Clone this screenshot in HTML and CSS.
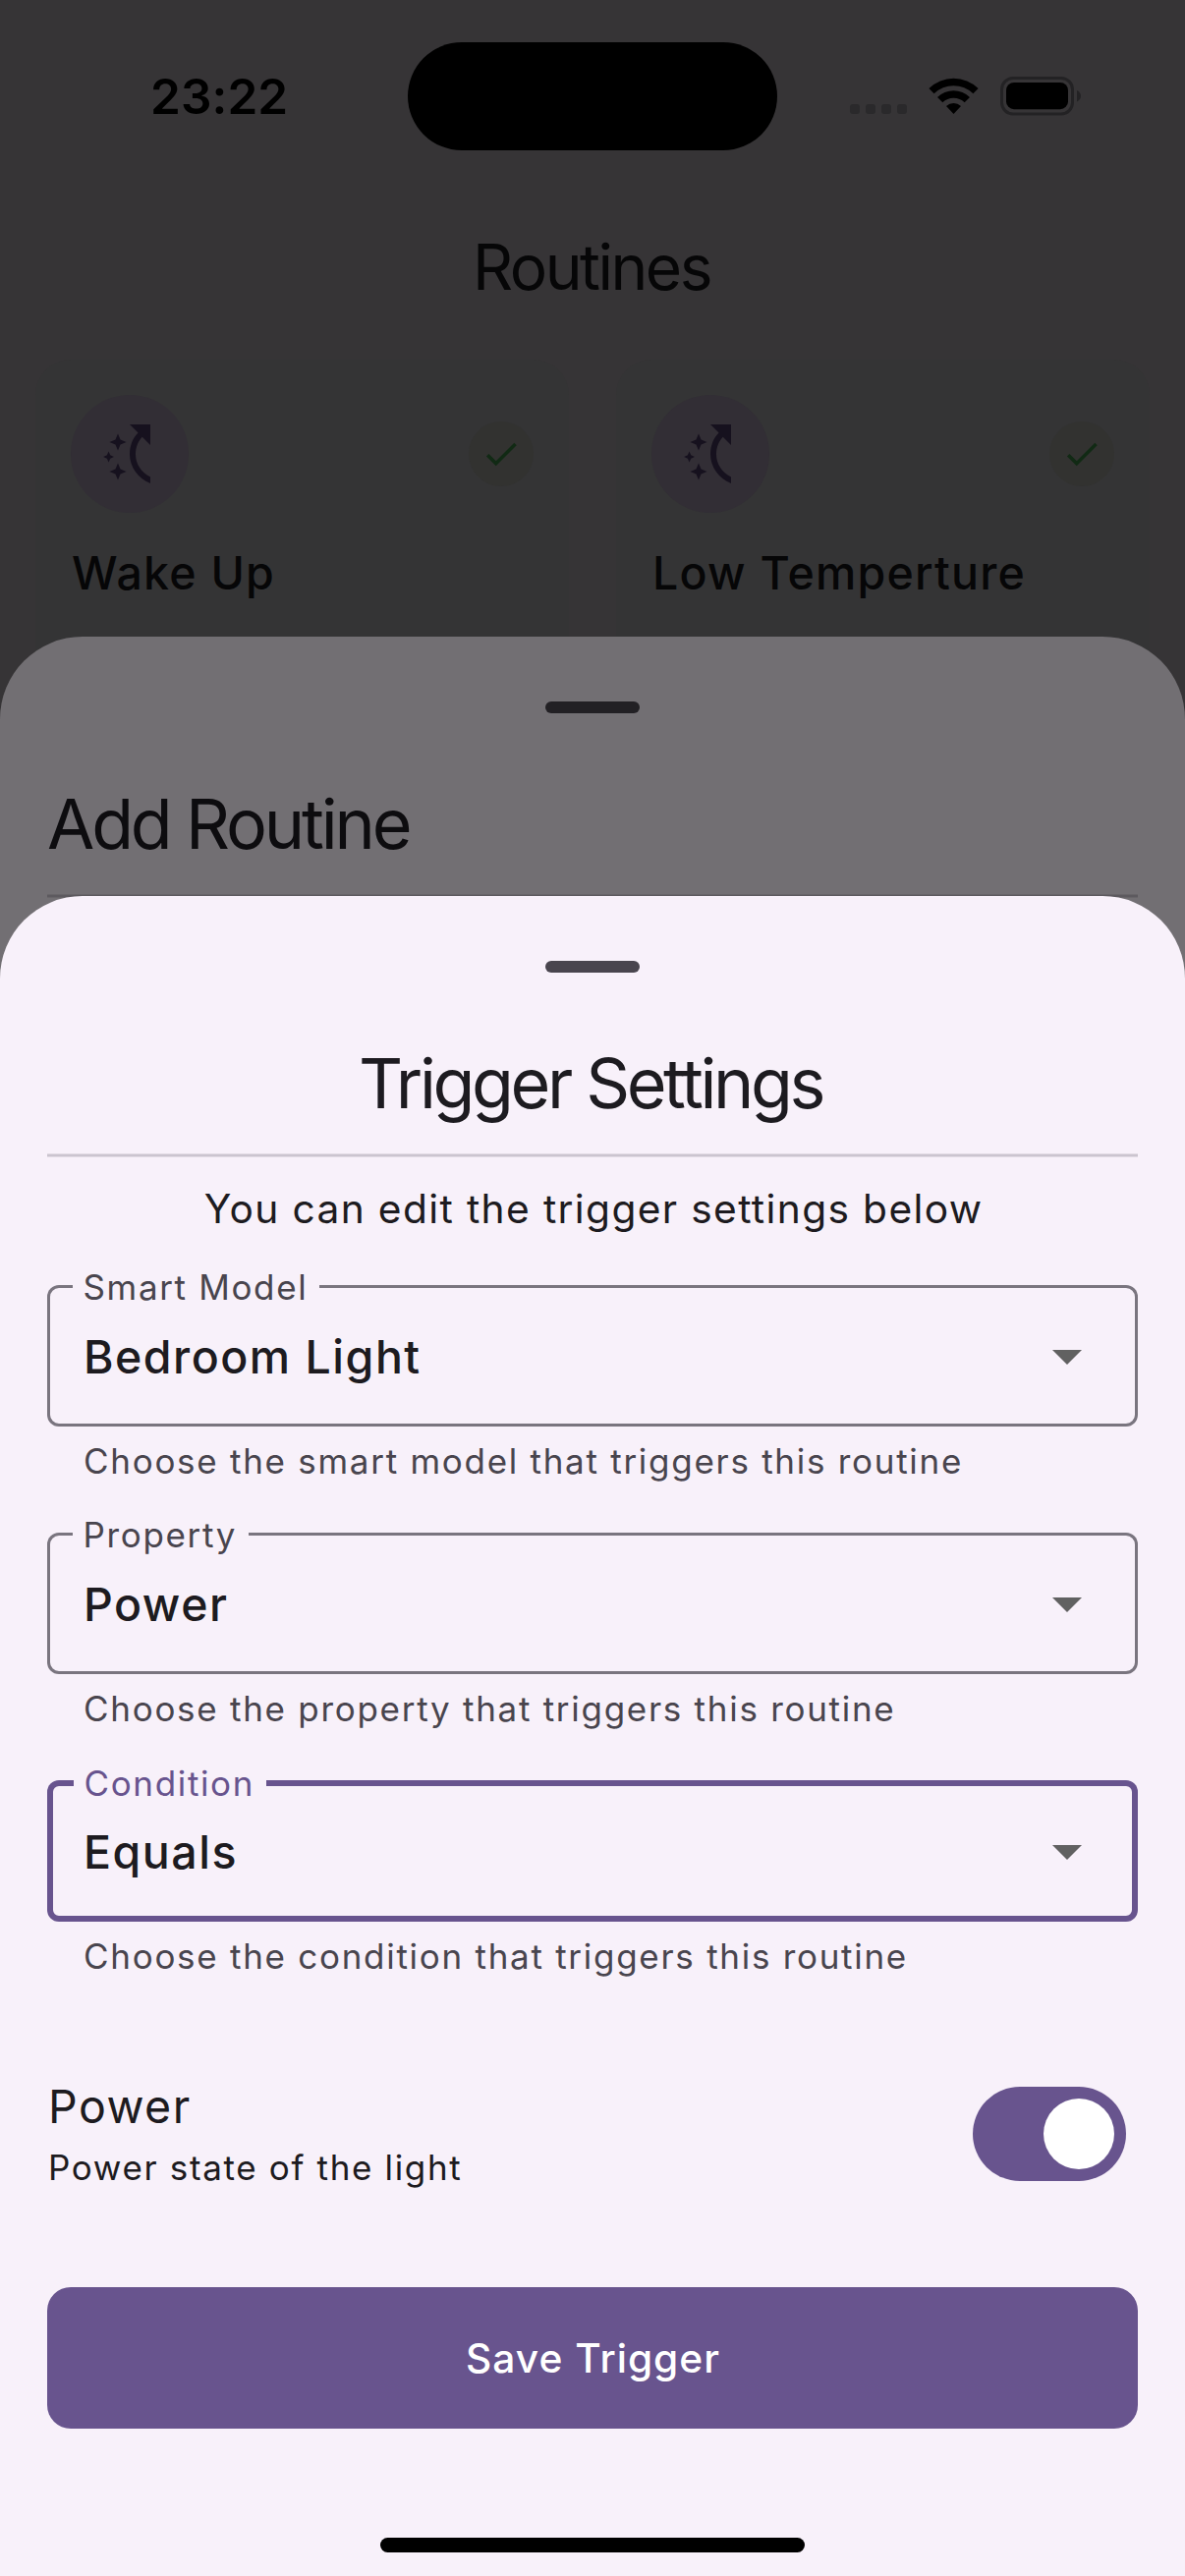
FILE: index.html
```html
<!DOCTYPE html>
<html lang="en">
<head>
<meta charset="utf-8">
<title>Trigger Settings</title>
<link rel="stylesheet" href="styles.css">
</head>
<body>
<svg class="defs" width="0" height="0" aria-hidden="true">
  <symbol id="routine" viewBox="0 0 24 24">
    <path d="M19 2h-7l2.85 2.85C13 6.7 12 9.3 12 12.1c0 4.3 2.8 8.2 7 9.9v-2.2c-3.1-1.5-5-4.4-5-7.7 0-2.3.8-4.3 2.25-5.85L19 9z"/>
    <path d="M8 5.15l.85 2 2 .85-2 .85-.85 2-.85-2-2-.85 2-.85zM8 15.15l.85 2 2 .85-2 .85-.85 2-.85-2-2-.85 2-.85zM4.85 11.2l.56 1.24 1.24.56-1.24.56-.56 1.24-.56-1.24L3.05 13l1.24-.56z"/>
  </symbol>
  <symbol id="check" viewBox="0 0 24 24">
    <path d="M9 16.17L4.83 12l-1.42 1.41L9 19 21 7l-1.41-1.41z"/>
  </symbol>
</svg>

<div class="screen">
  <header class="status">
    <span class="time">23:22</span>
    <span class="island"></span>
    <svg class="indicators" width="236" height="40" viewBox="865 78 236 40">
      <g fill="#2a292b">
        <rect x="865" y="106" width="10" height="10" rx="3"/>
        <rect x="881" y="106" width="10" height="10" rx="3"/>
        <rect x="897" y="106" width="10" height="10" rx="3"/>
        <rect x="913" y="106" width="10" height="10" rx="3"/>
      </g>
      <path d="M945.4 90a36 36 0 0 1 50.2 0l-5.2 5.3a28.5 28.5 0 0 0-39.8 0z"/>
      <path d="M954 99a23.6 23.6 0 0 1 33 0l-5.3 5.3a16 16 0 0 0-22.4 0z"/>
      <path d="M963 108a11.2 11.2 0 0 1 15 0l-7.5 8z"/>
      <rect x="1019.5" y="79.5" width="72" height="36.5" rx="11.5" fill="none" stroke="#232224" stroke-width="3"/>
      <rect x="1024" y="84" width="63" height="27.2" rx="8"/>
      <path d="M1096 92c5.3 2.4 5.3 9 0 11.4z" fill="#232224"/>
    </svg>
  </header>

  <main class="page">
    <h1 class="page-title">Routines</h1>
    <div class="cards">
      <article class="card">
        <div class="card-top">
          <span class="card-icon"><svg width="72" height="72"><use href="#routine"/></svg></span>
          <span class="card-check"><svg width="42" height="42"><use href="#check"/></svg></span>
        </div>
        <h2 class="card-name">Wake Up</h2>
      </article>
      <article class="card">
        <div class="card-top">
          <span class="card-icon"><svg width="72" height="72"><use href="#routine"/></svg></span>
          <span class="card-check"><svg width="42" height="42"><use href="#check"/></svg></span>
        </div>
        <h2 class="card-name">Low Temperture</h2>
      </article>
    </div>
  </main>

  <section class="sheet sheet-back">
    <div class="handle"></div>
    <h2 class="sheet-title">Add Routine</h2>
    <div class="divider"></div>
  </section>

  <section class="sheet sheet-front">
    <div class="handle"></div>
    <h2 class="sheet-title centered">Trigger Settings</h2>
    <div class="divider"></div>
    <p class="intro">You can edit the trigger settings below</p>

    <div class="fields">
      <div class="field">
        <div class="select">
          <span class="label">Smart Model</span>
          <span class="value">Bedroom Light</span>
          <svg class="caret" width="30" height="15" viewBox="0 0 30 15"><path d="M0 0h30L15 15z"/></svg>
        </div>
        <p class="helper">Choose the smart model that triggers this routine</p>
      </div>
      <div class="field">
        <div class="select">
          <span class="label">Property</span>
          <span class="value">Power</span>
          <svg class="caret" width="30" height="15" viewBox="0 0 30 15"><path d="M0 0h30L15 15z"/></svg>
        </div>
        <p class="helper">Choose the property that triggers this routine</p>
      </div>
      <div class="field focused">
        <div class="select">
          <span class="label">Condition</span>
          <span class="value">Equals</span>
          <svg class="caret" width="30" height="15" viewBox="0 0 30 15"><path d="M0 0h30L15 15z"/></svg>
        </div>
        <p class="helper">Choose the condition that triggers this routine</p>
      </div>
    </div>

    <div class="toggle-row">
      <div class="toggle-text">
        <span class="toggle-title">Power</span>
        <span class="toggle-sub">Power state of the light</span>
      </div>
      <span class="switch"><span class="thumb"></span></span>
    </div>

    <button class="save" type="button">Save Trigger</button>
    <div class="home"></div>
  </section>
</div>
</body>
</html>
```
FILE: styles.css
```css
* {
  box-sizing: border-box;
}

body,
h1,
h2,
p {
  margin: 0;
  font-weight: 400;
}

body {
  font-family: Inter, "Liberation Sans", sans-serif;
  color: #1d1b20;
}

.defs {
  position: absolute;
}

.screen {
  position: relative;
  width: 1206px;
  height: 2622px;
  overflow: hidden;
  background: #363436;
}

/* Status bar */
.status {
  display: flex;
  align-items: center;
  height: 196px;
  padding-left: 153px;
  color: #000;
}

.time {
  width: 262px;
  font-size: 49.5px;
  font-weight: 600;
  line-height: 60px;
  letter-spacing: 0.1px;
}

.island {
  width: 376px;
  height: 110px;
  margin: -1px 74px 0 0;
  border-radius: 55px;
  background: #000;
}

/* Routines page, dimmed by the sheets above it */
.page {
  color: #060607;
}

.page-title {
  height: 170px;
  padding: 36px 2px 0 0;
  font-size: 64px;
  line-height: 80px;
  letter-spacing: -2.5px;
  text-align: center;
}

.cards {
  display: grid;
  grid-template-columns: 1fr 1fr;
  gap: 48px;
  padding: 0 36px;
}

.card {
  height: 480px;
  padding: 36px;
  border-radius: 36px;
  background: #343435;
}

.card-top {
  display: flex;
  align-items: center;
  justify-content: space-between;
}

.card-icon,
.card-check {
  display: flex;
  align-items: center;
  justify-content: center;
  border-radius: 50%;
}

.card-icon {
  width: 120px;
  height: 120px;
  background: #322e35;
  fill: #16111e;
}

.card-check {
  width: 66px;
  height: 66px;
  background: #323230;
  fill: #112a14;
}

.card-name {
  padding: 31px 0 0 1px;
  font-size: 46.5px;
  font-weight: 500;
  line-height: 60px;
  letter-spacing: 1.23px;
}

/* Bottom sheets */
.sheet {
  position: absolute;
  right: 0;
  bottom: 0;
  left: 0;
  display: flex;
  flex-direction: column;
  padding: 66px 48px 0;
  border-radius: 84px 84px 0 0;
}

.sheet-back {
  top: 648px;
  background: #726f73;
  color: #0d0c0f;
}

.sheet-front {
  top: 912px;
  background: #f8f1fa;
}

.handle {
  align-self: center;
  width: 96px;
  height: 12px;
  border-radius: 6px;
  background: #49454e;
}

.sheet-back .handle {
  background: #222024;
}

.sheet-title {
  margin-top: 68px;
  font-size: 70px;
  line-height: 90px;
  letter-spacing: -3.15px;
}

.sheet-title.centered {
  padding-right: 4px;
  letter-spacing: -3.4px;
  text-align: center;
}

.divider {
  height: 4px;
  margin-top: 26px;
  border: solid #e2dbe4;
  border-width: 1px 0;
  background: #cbc4cf;
}

.sheet-back .divider {
  border-color: #686569;
  background: #5d5a5f;
}

.intro {
  margin-top: 23px;
  padding-left: 2px;
  font-size: 40.7px;
  line-height: 60px;
  letter-spacing: 1.36px;
  text-align: center;
}

/* Outlined dropdown fields */
.fields {
  display: flex;
  flex-direction: column;
  gap: 49px;
  margin-top: 47px;
}

.select {
  position: relative;
  display: flex;
  align-items: center;
  justify-content: space-between;
  height: 144px;
  padding: 2px 57px 0 37px;
  border-radius: 12px;
  box-shadow: inset 0 0 0 3px #7a757f;
}

.label {
  position: absolute;
  top: -22px;
  left: 26px;
  padding: 0 12px 0 10.5px;
  background: #f8f1fa;
  color: #49454e;
  font-size: 35px;
  line-height: 48px;
  letter-spacing: 1.65px;
}

.value {
  font-size: 46.5px;
  font-weight: 500;
  line-height: 60px;
  letter-spacing: 1.5px;
}

.caret {
  fill: #616161;
}

.helper {
  margin-top: 11px;
  padding-left: 37px;
  color: #49454e;
  font-size: 35px;
  line-height: 48px;
  letter-spacing: 1.72px;
}

.focused .select {
  box-shadow: inset 0 0 0 6px #68548e;
}

.focused .label {
  top: -21px;
  left: 27px;
  color: #68548e;
}

/* Switch row */
.toggle-row {
  display: flex;
  align-items: center;
  justify-content: space-between;
  margin-top: 99px;
  padding: 0 12px 0 1px;
}

.toggle-text {
  display: flex;
  flex-direction: column;
  gap: 8px;
}

.toggle-title {
  font-size: 46.5px;
  line-height: 60px;
  letter-spacing: 1.47px;
}

.toggle-sub {
  font-size: 35px;
  line-height: 48px;
  letter-spacing: 1.65px;
}

.switch {
  display: flex;
  justify-content: flex-end;
  width: 156px;
  height: 96px;
  padding: 12px;
  border-radius: 48px;
  background: #68548e;
}

.thumb {
  width: 72px;
  height: 72px;
  border-radius: 50%;
  background: #fff;
}

.save {
  height: 144px;
  margin-top: 98px;
  padding: 1px 0 0 1px;
  border: 0;
  border-radius: 24px;
  background: #68548e;
  color: #fff;
  font-family: inherit;
  font-size: 40.7px;
  font-weight: 500;
  line-height: 60px;
  letter-spacing: 1px;
}

.home {
  align-self: center;
  width: 432px;
  height: 15px;
  margin-top: 111px;
  border-radius: 8px;
  background: #000;
}
```
